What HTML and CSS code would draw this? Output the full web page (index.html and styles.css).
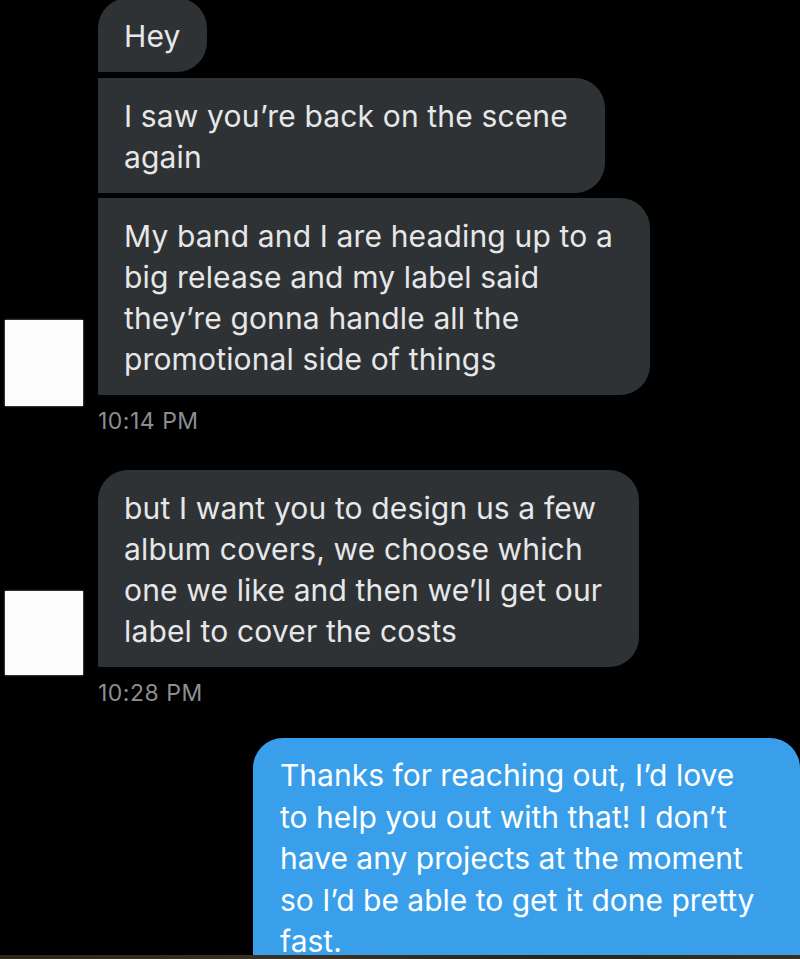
FILE: index.html
```html
<!DOCTYPE html>
<html lang="en">
<head>
<meta charset="utf-8">
<title>Messages</title>
<link rel="stylesheet" href="styles.css">
</head>
<body>
<div class="screen">
  <div class="thread">
    <div class="group">
      <div class="avatar-col"><div class="avatar avatar-1"></div></div>
      <div class="msgs">
        <div class="bubble bubble-first">Hey</div>
        <div class="bubble bubble-mid">I saw you’re back on the scene<br>again</div>
        <div class="bubble bubble-last">My band and I are heading up to a<br>big release and my label said<br>they’re gonna handle all the<br>promotional side of things</div>
        <div class="time">10:14 PM</div>
      </div>
    </div>
    <div class="group group-2">
      <div class="avatar-col"><div class="avatar avatar-2"></div></div>
      <div class="msgs">
        <div class="bubble bubble-single">but I want you to design us a few<br>album covers, we choose which<br>one we like and then we’ll get our<br>label to cover the costs</div>
        <div class="time">10:28 PM</div>
      </div>
    </div>
    <div class="sent">Thanks for reaching out, I’d love<br>to help you out with that! I don’t<br>have any projects at the moment<br>so I’d be able to get it done pretty<br>fast.</div>
  </div>
</div>
<div class="strip"></div>
</body>
</html>
```

FILE: styles.css
```css
html, body {
  margin: 0;
  padding: 0;
  background: #000;
}

body {
  font-family: Inter, "Liberation Sans", Arial, sans-serif;
  -webkit-font-smoothing: antialiased;
}

.screen {
  height: 955px;
  overflow: hidden;
}

.thread {
  margin-top: -2px;
}

.group {
  display: flex;
}

.group-2 {
  margin-top: 34px;
}

.avatar-col {
  width: 98px;
  flex: none;
  display: flex;
  align-items: flex-end;
}

.avatar {
  width: 78px;
  height: 86px;
  margin-left: 5px;
  margin-bottom: 30px;
  background: #fdfdfd;
  box-shadow: 0 0 2px rgba(255, 255, 255, 0.6);
}

.avatar-2 {
  height: 84px;
  margin-bottom: 33px;
}

.msgs {
  display: flex;
  flex-direction: column;
  align-items: flex-start;
  gap: 5px;
}

.bubble {
  background: #2f3235;
  color: #e6e7e8;
  font-size: 30px;
  line-height: 41px;
  letter-spacing: 0.15px;
  padding: 18px 37px 15px 26px;
  border-radius: 30px;
  white-space: nowrap;
}

.bubble-first {
  border-bottom-left-radius: 0;
  padding-right: 26px;
  margin-bottom: 1px;
}

.bubble-mid,
.bubble-last {
  border-top-left-radius: 0;
  border-bottom-left-radius: 0;
}

.bubble-single {
  border-bottom-left-radius: 0;
}

.time {
  margin-top: 6px;
  color: #8b8e92;
  font-size: 23px;
  line-height: 30px;
  letter-spacing: 0.5px;
}

.sent {
  margin: 30px 0 0 253px;
  background: #3a9fea;
  color: #fff;
  font-size: 30px;
  line-height: 41.5px;
  padding: 17px 20px 30px 27px;
  border-radius: 30px;
  white-space: nowrap;
}

.strip {
  height: 4px;
  background: linear-gradient(90deg, #2c2619, #3b3224 40%, #2a2416 70%, #3a3021);
}
```
